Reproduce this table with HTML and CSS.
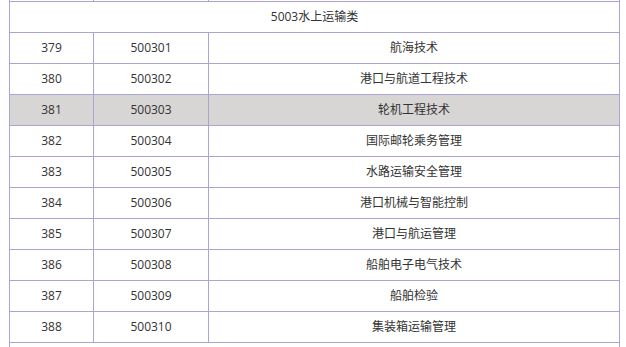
FILE: index.html
```html
<!DOCTYPE html>
<html lang="zh-CN">
<head>
<meta charset="utf-8">
<title>专业目录</title>
<link rel="stylesheet" href="styles.css">
</head>
<body>
<div class="wrap">
<table class="major-table">
<colgroup>
<col class="c-no">
<col class="c-code">
<col class="c-name">
</colgroup>
<tbody>
<tr class="cut"><td></td><td></td><td></td></tr>
<tr><td colspan="3">5003水上运输类</td></tr>
<tr><td>379</td><td>500301</td><td>航海技术</td></tr>
<tr><td>380</td><td>500302</td><td>港口与航道工程技术</td></tr>
<tr class="hl"><td>381</td><td>500303</td><td>轮机工程技术</td></tr>
<tr><td>382</td><td>500304</td><td>国际邮轮乘务管理</td></tr>
<tr><td>383</td><td>500305</td><td>水路运输安全管理</td></tr>
<tr><td>384</td><td>500306</td><td>港口机械与智能控制</td></tr>
<tr><td>385</td><td>500307</td><td>港口与航运管理</td></tr>
<tr><td>386</td><td>500308</td><td>船舶电子电气技术</td></tr>
<tr><td>387</td><td>500309</td><td>船舶检验</td></tr>
<tr><td>388</td><td>500310</td><td>集装箱运输管理</td></tr>
<tr class="cut"><td colspan="3"></td></tr>
</tbody>
</table>
</div>
</body>
</html>
```

FILE: styles.css
```css
html, body {
  margin: 0;
  padding: 0;
  background: #ffffff;
}
.wrap {
  padding-left: 9px;
}
.major-table {
  margin-top: -30px;
  width: 611px;
  border-collapse: collapse;
  table-layout: fixed;
  font-family: "Open Sans", "Noto Sans CJK SC", sans-serif;
  font-size: 12px;
  color: #333333;
}
.c-no { width: 84px; }
.c-code { width: 115px; }
.c-name { width: 411px; }
.major-table td {
  border: 1px solid #aaa3d3;
  height: 30px;
  padding: 0;
  text-align: center;
  vertical-align: middle;
  line-height: 16px;
}
.major-table tr.hl td {
  background: #d7d6d5;
}
```
